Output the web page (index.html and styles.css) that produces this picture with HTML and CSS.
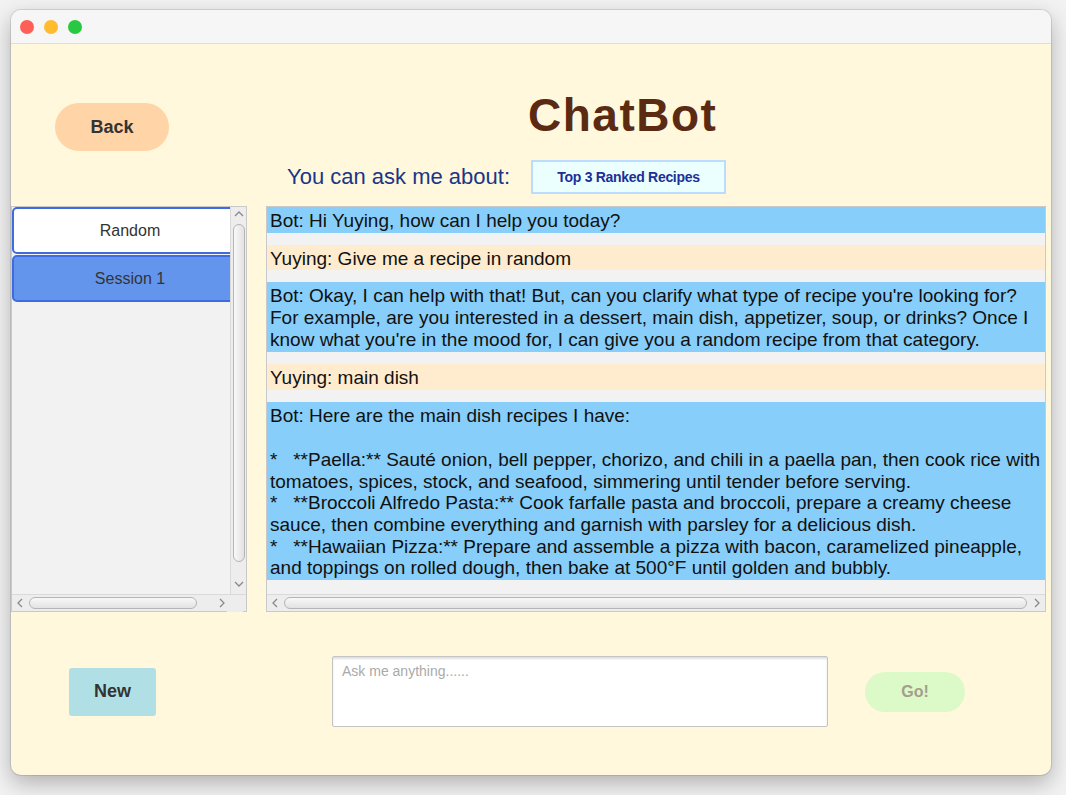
FILE: index.html
```html
<!DOCTYPE html>
<html>
<head>
<meta charset="utf-8">
<link rel="stylesheet" href="styles.css">
</head>
<body>
<div class="window">
  <div class="titlebar">
    <span class="light red"></span><span class="light yellow"></span><span class="light green"></span>
  </div>
  <div class="content">
    <div class="header">
      <button class="back">Back</button>
      <h1 class="title">ChatBot</h1>
    </div>
    <div class="ask-row">
      <span class="ask-label">You can ask me about:</span>
      <button class="topic">Top 3 Ranked Recipes</button>
    </div>
    <div class="main">
      <div class="sessions">
        <div class="sess-body">
          <div class="sess-list">
            <div class="sess-item">Random</div>
            <div class="sess-item active">Session 1</div>
          </div>
          <div class="vscroll">
            <svg class="chev" width="10" height="6" viewBox="0 0 10 6"><polyline points="1,5 5,1 9,5"/></svg>
            <div class="vthumb"></div>
            <svg class="chev" width="10" height="6" viewBox="0 0 10 6"><polyline points="1,1 5,5 9,1"/></svg>
          </div>
        </div>
        <div class="hscroll short">
          <svg class="chev" width="6" height="10" viewBox="0 0 6 10"><polyline points="5,1 1,5 5,9"/></svg>
          <div class="hthumb sess-thumb"></div>
          <svg class="chev" width="6" height="10" viewBox="0 0 6 10"><polyline points="1,1 5,5 1,9"/></svg>
          <div class="corner"></div>
        </div>
      </div>
      <div class="chat">
        <div class="messages">
          <div class="msg bot">Bot: Hi Yuying, how can I help you today?</div>
          <div class="msg user">Yuying: Give me a recipe in random</div>
          <div class="msg bot">Bot: Okay, I can help with that! But, can you clarify what type of recipe you're looking for?
For example, are you interested in a dessert, main dish, appetizer, soup, or drinks? Once I
know what you're in the mood for, I can give you a random recipe from that category.</div>
          <div class="msg user">Yuying: main dish</div>
          <div class="msg bot">Bot: Here are the main dish recipes I have:

*   **Paella:** Sauté onion, bell pepper, chorizo, and chili in a paella pan, then cook rice with
tomatoes, spices, stock, and seafood, simmering until tender before serving.
*   **Broccoli Alfredo Pasta:** Cook farfalle pasta and broccoli, prepare a creamy cheese
sauce, then combine everything and garnish with parsley for a delicious dish.
*   **Hawaiian Pizza:** Prepare and assemble a pizza with bacon, caramelized pineapple,
and toppings on rolled dough, then bake at 500°F until golden and bubbly.</div>
        </div>
        <div class="hscroll">
          <svg class="chev" width="6" height="10" viewBox="0 0 6 10"><polyline points="5,1 1,5 5,9"/></svg>
          <div class="hthumb chat-thumb"></div>
          <svg class="chev" width="6" height="10" viewBox="0 0 6 10"><polyline points="1,1 5,5 1,9"/></svg>
        </div>
      </div>
    </div>
    <div class="bottom">
      <button class="new">New</button>
      <textarea class="input" placeholder="Ask me anything......"></textarea>
      <button class="go">Go!</button>
    </div>
  </div>
</div>
</body>
</html>
```
FILE: styles.css
```css
* { box-sizing: border-box; }
html, body { margin: 0; padding: 0; }
body {
  background: #f2f2f2;
  width: 1066px;
  height: 795px;
  overflow: hidden;
  font-family: "Liberation Sans", Arial, sans-serif;
  padding: 10px 0 0 11px;
}
.window {
  width: 1040px;
  height: 765px;
  border-radius: 10px;
  overflow: hidden;
  background: #fff8dc;
  box-shadow: 0 0 0 1px rgba(0,0,0,0.10), 0 8px 22px rgba(0,0,0,0.28);
}
.titlebar {
  height: 34px;
  background: #f6f6f6;
  border-bottom: 1px solid #e3dfcf;
  display: flex;
  align-items: center;
  gap: 10px;
  padding-left: 9px;
}
.light { width: 14px; height: 14px; border-radius: 50%; display: block; }
.red { background: #fe5f57; }
.yellow { background: #febc2e; }
.green { background: #28c840; }

.content { display: flex; flex-direction: column; }
.header { height: 116px; display: flex; align-items: flex-start; }
button { font-family: "Liberation Sans", Arial, sans-serif; border: none; padding: 0; cursor: pointer; }
.back {
  margin: 59px 0 0 44px;
  width: 114px; height: 48px;
  border-radius: 24px;
  background: #ffd4a6;
  color: #333;
  font-size: 18px; font-weight: bold;
}
.title {
  margin: 48px 0 0 359px;
  font-size: 46px; line-height: 46px;
  letter-spacing: 1.5px;
  font-weight: bold;
  color: #5b2a13;
}
.ask-row { height: 34px; display: flex; align-items: center; padding-left: 276px; gap: 21px; }
.ask-label { font-size: 22px; color: #1b3588; }
.topic {
  width: 195px; height: 34px;
  background: #ebfffe;
  border: 2px solid #bcdcff;
  color: #1c2f99;
  font-size: 14px; font-weight: bold;
  letter-spacing: -0.3px;
}
.main { margin-top: 12px; height: 406px; display: flex; gap: 19px; }
.sessions {
  width: 236px; height: 406px;
  border: 1px solid #c9c9c9;
  background: #f2f2f2;
  display: flex; flex-direction: column;
}
.sess-body { height: 387px; display: flex; }
.sess-list { width: 218px; display: flex; flex-direction: column; gap: 1px; overflow: hidden; }
.sess-item {
  flex: none;
  width: 236px;
  height: 47px;
  border: 2px solid #3f6be0;
  border-radius: 5px;
  background: #fff;
  color: #333;
  font-size: 16px;
  display: flex; align-items: center; justify-content: center;
}
.sess-item.active { background: #6495ed; }
.vscroll {
  width: 16px;
  background: #ededed;
  border-left: 1px solid #dadada;
  display: flex; flex-direction: column; align-items: center;
  padding: 4px 0 4px;
}
.chev { fill: none; stroke: #8a8a8a; stroke-width: 1.3; flex: none; }
.vthumb {
  width: 12px; height: 338px;
  margin: 7px 0 19px;
  border: 1px solid #b5b5b5;
  border-radius: 6px;
  background: linear-gradient(to right, #f8f8f8, #e2e2e2);
}
.hscroll {
  height: 17px;
  background: #ededed;
  border-top: 1px solid #dadada;
  display: flex; align-items: center;
  padding-left: 5px;
}
.hthumb {
  height: 12px;
  border: 1px solid #b5b5b5;
  border-radius: 6px;
  background: linear-gradient(to bottom, #f8f8f8, #e2e2e2);
  margin: 0 8px 0 6px;
}
.sess-thumb { width: 168px; margin-right: 22px; }
.corner { width: 16px; height: 17px; margin-left: 2px; background: #ededed; }
.chat {
  width: 780px; height: 406px;
  border: 1px solid #c9c9c9;
  background: #f2f2f2;
  display: flex; flex-direction: column;
}
.messages { height: 387px; overflow: hidden; }
.msg {
  white-space: pre;
  overflow: hidden;
  font-size: 19px;
  line-height: 21.7px;
  padding: 3px 3px 1px;
  color: #111;
  margin-bottom: 12px;
}
.msg:nth-child(3), .msg:nth-child(4) { margin-bottom: 12.6px; }
.bot { background: #87cefa; }
.user { background: #ffebcd; }
.chat-thumb { width: 743px; margin-right: 7px; }
.bottom { margin-top: 44px; height: 71px; display: flex; align-items: center; }
.new {
  margin-left: 58px;
  width: 87px; height: 48px;
  background: #b0e0e6;
  border-radius: 3px;
  color: #333;
  font-size: 18px; font-weight: bold;
}
.input {
  margin-left: 176px;
  width: 496px; height: 71px;
  border: 1px solid #c4c4c4;
  border-radius: 2px;
  box-shadow: inset 0 2px 2px rgba(0,0,0,0.12);
  background: #fff;
  font-family: "Liberation Sans", Arial, sans-serif;
  font-size: 14px;
  padding: 6px 9px;
  resize: none;
  outline: none;
}
.input::placeholder { color: #aaa; }
.go {
  margin-left: 37px;
  width: 100px; height: 40px;
  border-radius: 20px;
  background: #dcf9c8;
  color: #a49e8c;
  font-size: 16px; font-weight: bold;
}
```
